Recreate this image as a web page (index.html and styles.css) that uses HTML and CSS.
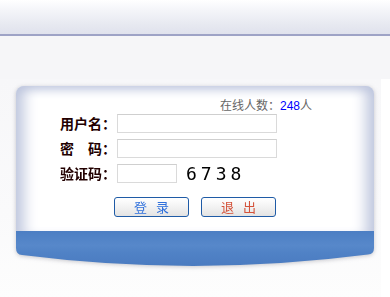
FILE: index.html
```html
<!DOCTYPE html>
<html lang="zh">
<head>
<meta charset="utf-8">
<title>登录</title>
<link rel="stylesheet" href="styles.css">
</head>
<body>
<div class="topbar"></div>
<div class="gap"></div>
<div class="stage">
  <div class="card">
    <div class="card-body">
      <div class="online">在线人数：<span class="num">248</span>人</div>
      <div class="form">
        <label class="lbl">用户名：</label><input class="inp" type="text">
        <label class="lbl">密　码：</label><input class="inp" type="password">
        <label class="lbl">验证码：</label>
        <div class="code-row"><input class="inp short" type="text"><span class="captcha">6738</span></div>
      </div>
      <div class="buttons">
        <button class="btn login">登 录</button>
        <button class="btn logout">退 出</button>
      </div>
    </div>
    <div class="card-foot"></div>
  </div>
</div>
</body>
</html>
```
FILE: styles.css
```css
html, body {
  margin: 0;
  padding: 0;
  background: #ffffff;
  font-family: "Noto Sans CJK SC", "Liberation Sans", sans-serif;
}
.topbar {
  height: 34px;
  background: linear-gradient(#ffffff 0%, #f4f5f9 30%, #e6e8f0 75%, #e0e2ed 100%);
  border-bottom: 2px solid #9ea3c6;
  box-shadow: 0 1px 0 #d3d6e4;
}
.gap {
  height: 43px;
  background: #f6f6f8;
}
.stage {
  width: 381px;
  height: 220px;
  padding: 7px 0 0 16px;
  box-sizing: border-box;
  background: linear-gradient(#f7f7f9 0%, #fafafb 60%, #fdfdfd 100%);
}
.card {
  width: 358px;
  filter: drop-shadow(0 1px 2px rgba(60, 60, 80, 0.28));
}
.card-body {
  height: 145px;
  box-sizing: border-box;
  background: #ffffff;
  border-radius: 8px 8px 0 0;
  padding: 11px 0 0 44px;
  box-shadow:
    inset 18px 0 14px -10px #bfc7de,
    inset -18px 0 14px -10px #bfc7de,
    inset 0 12px 10px -8px #c3cae0;
}
.online {
  height: 16px;
  line-height: 16px;
  font-size: 12px;
  color: #666666;
  text-align: right;
  padding-right: 62px;
}
.online .num {
  color: #0000ff;
  font-family: "Liberation Sans", sans-serif;
}
.form {
  margin-top: 1px;
  display: grid;
  grid-template-columns: 57px auto;
  row-gap: 6px;
  align-items: center;
}
.lbl {
  font-size: 14px;
  font-weight: bold;
  color: #220000;
  line-height: 19px;
  white-space: nowrap;
}
.inp {
  width: 160px;
  height: 19px;
  box-sizing: border-box;
  border: 1px solid #dadada;
  border-top-color: #cfcfcf;
  margin: 0;
  padding: 0 2px;
  background: #ffffff;
  outline: none;
}
.inp.short {
  width: 60px;
}
.code-row {
  display: flex;
  align-items: center;
  gap: 9px;
}
.captcha {
  font-family: "DejaVu Sans Mono", monospace;
  font-size: 18px;
  letter-spacing: 4px;
  color: #000000;
  line-height: 19px;
}
.buttons {
  margin-top: 14px;
  margin-left: 54px;
  display: flex;
  gap: 12px;
}
.btn {
  width: 75px;
  height: 20px;
  box-sizing: border-box;
  border: 1px solid #1f5ba6;
  border-radius: 3px;
  background: linear-gradient(#ffffff 0%, #f4f4f4 45%, #e3e3e3 100%);
  font-family: "Noto Sans CJK SC", sans-serif;
  font-size: 13px;
  line-height: 16px;
  padding: 0;
  letter-spacing: 3px;
  text-indent: 3px;
}
.btn.login { color: #2f70dc; }
.btn.logout { color: #d4523a; }
.card-foot {
  height: 36px;
  background: linear-gradient(#4c7ec3 0%, #5788ca 40%, #5082c6 60%, #4a7bc0 100%);
  clip-path: path('M0 0 H358 V17 Q358 23 352 23.5 Q179 46 6 24 Q0 23.5 0 17 Z');
}
```
